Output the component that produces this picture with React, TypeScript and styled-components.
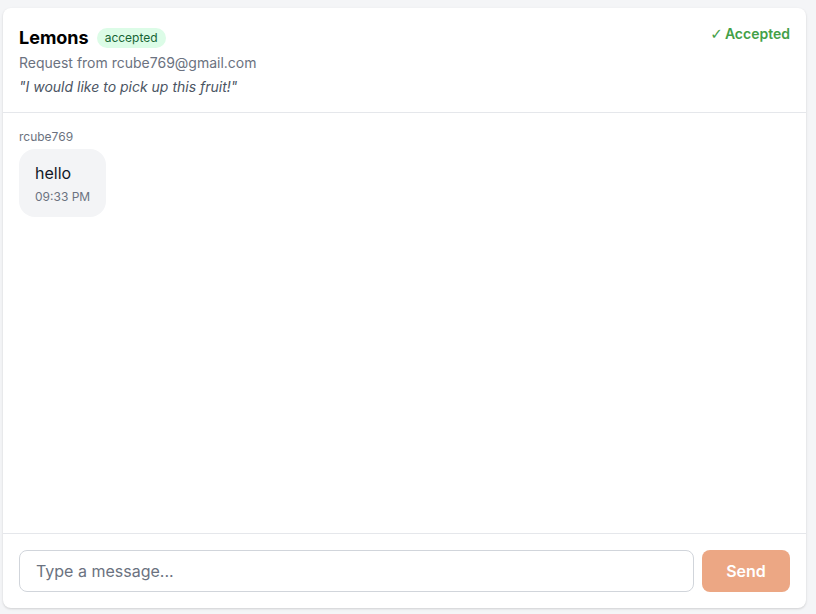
import styled, { createGlobalStyle } from "styled-components";

const GlobalStyle = createGlobalStyle`
  html, body {
    margin: 0;
    padding: 0;
    background: #f4f5f7;
    font-family: Inter, "Noto Sans", sans-serif;
  }
`;

const Page = styled.div`
  padding: 8px 10px 6px 3px;
`;

const Card = styled.div`
  height: 600px;
  background: #ffffff;
  border-radius: 8px;
  box-shadow: 0 1px 3px rgba(0, 0, 0, 0.1), 0 1px 2px rgba(0, 0, 0, 0.06);
  display: flex;
  flex-direction: column;
  overflow: hidden;
`;

const Header = styled.div`
  display: flex;
  justify-content: space-between;
  align-items: flex-start;
  padding: 16px 16px 15px;
  border-bottom: 1px solid #e5e7eb;
`;

const TitleRow = styled.div`
  display: flex;
  align-items: center;
  gap: 8px;
`;

const Title = styled.h2`
  margin: 0;
  font-size: 18px;
  line-height: 28px;
  font-weight: 700;
  color: #000;
`;

const Badge = styled.span<{ tone: string; bg: string }>`
  font-size: 12px;
  line-height: 16px;
  padding: 2px 8px;
  border-radius: 9999px;
  background: ${({ bg }) => bg};
  color: ${({ tone }) => tone};
`;

const Sub = styled.div`
  font-size: 14px;
  line-height: 20px;
  color: #6b7280;
  margin-top: 1px;
`;

const Quote = styled.div`
  font-size: 14px;
  line-height: 20px;
  font-style: italic;
  color: #4b5563;
  margin-top: 4px;
`;

const Status = styled.div`
  font-size: 14px;
  line-height: 20px;
  font-weight: 600;
  color: #43a047;
  display: flex;
  align-items: center;
  gap: 2px;
`;

const Check = styled.span`
  font-family: "DejaVu Sans", sans-serif;
  font-size: 15px;
  font-weight: 700;
`;

const Messages = styled.div`
  flex: 1;
  padding: 16px;
  display: flex;
  flex-direction: column;
  align-items: flex-start;
`;

const Sender = styled.div`
  font-size: 12px;
  line-height: 16px;
  color: #6b7280;
  margin-bottom: 4px;
`;

const Bubble = styled.div`
  background: #f3f4f6;
  border-radius: 16px;
  padding: 12px 16px;
`;

const BubbleText = styled.div`
  font-size: 16px;
  line-height: 24px;
  color: #111827;
`;

const Time = styled.div`
  font-size: 12px;
  line-height: 16px;
  color: #6b7280;
  margin-top: 4px;
`;

const Footer = styled.div`
  border-top: 1px solid #e5e7eb;
  padding: 16px;
  display: flex;
  gap: 8px;
`;

const Input = styled.input`
  flex: 1;
  height: 42px;
  box-sizing: border-box;
  border: 1px solid #d1d5db;
  border-radius: 8px;
  padding: 0 16px;
  font-family: inherit;
  font-size: 16px;
  color: #111827;
  outline: none;
  &::placeholder {
    color: #6b7280;
  }
`;

const SendButton = styled.button`
  width: 88px;
  height: 42px;
  border: none;
  border-radius: 8px;
  background: #eca784;
  color: #fff;
  font-family: inherit;
  font-size: 16px;
  font-weight: 600;
`;

export default function App() {
  return (
    <>
      <GlobalStyle />
      <Page>
        <Card>
          <Header>
            <div>
              <TitleRow>
                <Title>Lemons</Title>
                <Badge tone="#166534" bg="#dcfce7">
                  accepted
                </Badge>
              </TitleRow>
              <Sub>Request from rcube769@gmail.com</Sub>
              <Quote>"I would like to pick up this fruit!"</Quote>
            </div>
            <Status>
              <Check>✓</Check>Accepted
            </Status>
          </Header>
          <Messages>
            <Sender>rcube769</Sender>
            <Bubble>
              <BubbleText>hello</BubbleText>
              <Time>09:33 PM</Time>
            </Bubble>
          </Messages>
          <Footer>
            <Input placeholder="Type a message..." />
            <SendButton>Send</SendButton>
          </Footer>
        </Card>
      </Page>
    </>
  );
}
